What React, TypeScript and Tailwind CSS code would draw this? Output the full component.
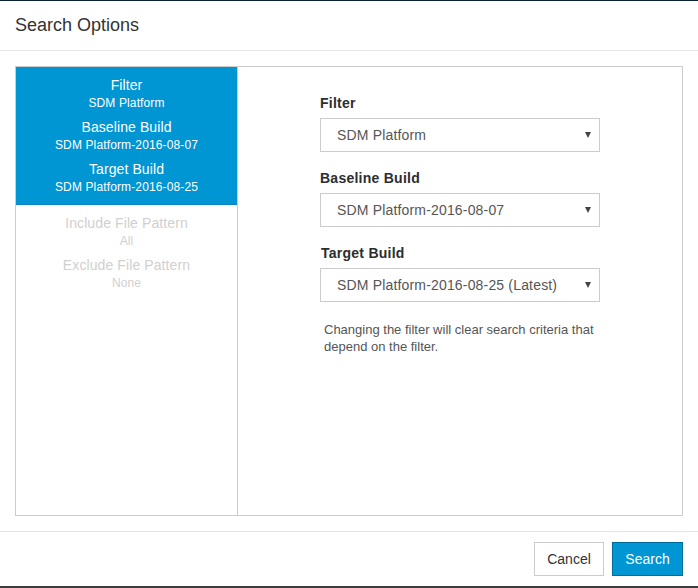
import React from "react";

function Summary({ title, value, active }: { title: string; value: string; active?: boolean }) {
  return (
    <div className={active ? "h-[42px] text-center text-white" : "h-[42px] text-center text-[#d0d0d0]"}>
      <div className="text-[14px] leading-[20px] tracking-[0.1px]">{title}</div>
      <div className="mt-px text-[12px] leading-[15px] tracking-[0.13px]">{value}</div>
    </div>
  );
}

function Field({ label, value, indent }: { label: string; value: string; indent?: boolean }) {
  return (
    <div className="w-[280px]">
      <div className={indent ? "h-[25px] pl-px text-[14px] leading-[20px] font-bold tracking-[0.25px] text-[#2d2d2d]" : "h-[25px] text-[14px] leading-[20px] font-bold tracking-[0.25px] text-[#2d2d2d]"}>{label}</div>
      <div className="flex h-[34px] items-center justify-between border border-[#cccccc] bg-white pl-4 pr-[8px] text-[14px] tracking-[0.17px] text-[#555555]">
        <span>{value}</span>
        <span className="h-0 w-0 border-x-[3.5px] border-t-[6px] border-x-transparent border-t-[#444444]" />
      </div>
    </div>
  );
}

export default function App() {
  return (
    <div className="flex h-[588px] w-[698px] flex-col overflow-hidden border-t border-b-2 border-t-[#0c2233] border-b-[#3c3c3c] bg-white font-['Liberation_Sans',Arial,sans-serif]">
      <div className="flex h-[50px] shrink-0 items-center border-b border-[#e5e5e5] px-[15px] pb-px text-[18px] text-[#333333]">Search Options</div>
      <div className="flex-1 px-[15px] pt-[15px] pb-[15px]">
        <div className="flex h-[450px] border border-[#cccccc]">
          <div className="w-[222px] shrink-0 border-r border-[#cccccc]">
            <div className="h-[138px] border-b border-[#0a85c0] bg-[#0095d3] pt-[8px]">
              <Summary active title="Filter" value="SDM Platform" />
              <Summary active title="Baseline Build" value="SDM Platform-2016-08-07" />
              <Summary active title="Target Build" value="SDM Platform-2016-08-25" />
            </div>
            <div className="pt-[8px]">
              <Summary title="Include File Pattern" value="All" />
              <Summary title="Exclude File Pattern" value="None" />
            </div>
          </div>
          <div className="flex-1 pl-[82px] pt-[26px]">
            <div className="flex flex-col gap-[16px]">
              <Field label="Filter" value="SDM Platform" />
              <Field label="Baseline Build" value="SDM Platform-2016-08-07" />
              <Field label="Target Build" value="SDM Platform-2016-08-25 (Latest)" indent />
            </div>
            <p className="mt-[19px] w-[280px] pl-1 text-[13px] leading-[17px] text-[#555555]">
              Changing the filter will clear search criteria that depend on the filter.
            </p>
          </div>
        </div>
      </div>
      <div className="flex h-[55px] shrink-0 items-start justify-end gap-2 border-t border-[#e5e5e5] pt-[10px] pr-[15px]">
        <button className="h-[34px] w-[70px] border border-[#cccccc] bg-white text-[14px] text-[#333333]">Cancel</button>
        <button className="h-[34px] w-[71px] border border-[#006c9b] bg-[#0095d3] text-[14px] text-white">Search</button>
      </div>
    </div>
  );
}
